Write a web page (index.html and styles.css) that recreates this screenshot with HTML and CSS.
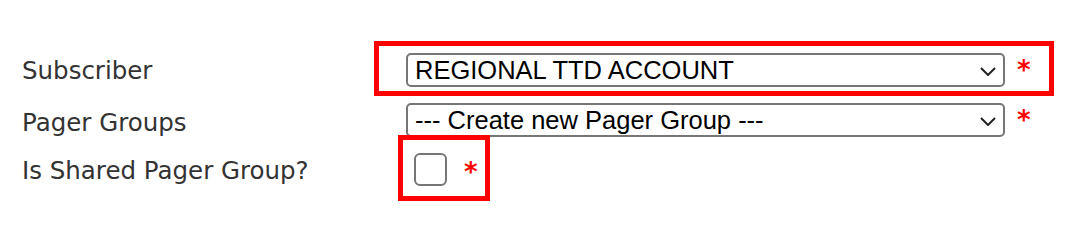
FILE: index.html
```html
<!DOCTYPE html>
<html lang="en">
<head>
<meta charset="utf-8">
<title>Pager Group</title>
<link rel="stylesheet" href="styles.css">
</head>
<body>
<form class="form">
  <div class="row row-first">
    <label class="label">Subscriber</label>
    <div class="field highlight highlight-select">
      <div class="select" role="combobox" aria-expanded="false">
        <span class="select-text">REGIONAL TTD ACCOUNT</span>
        <svg class="chevron" width="16" height="9" viewBox="0 0 16 9" aria-hidden="true"><polyline points="1,1 8,8 15,1" fill="none" stroke="#222" stroke-width="2"/></svg>
      </div>
      <span class="req">*</span>
    </div>
  </div>
  <div class="row row-second">
    <label class="label">Pager Groups</label>
    <div class="field">
      <div class="select" role="combobox" aria-expanded="false">
        <span class="select-text">--- Create new Pager Group ---</span>
        <svg class="chevron" width="16" height="9" viewBox="0 0 16 9" aria-hidden="true"><polyline points="1,1 8,8 15,1" fill="none" stroke="#222" stroke-width="2"/></svg>
      </div>
      <span class="req">*</span>
    </div>
  </div>
  <div class="row row-third">
    <label class="label">Is Shared Pager Group?</label>
    <div class="field highlight highlight-check">
      <input type="checkbox" class="check">
      <span class="req req-check">*</span>
    </div>
  </div>
</form>
</body>
</html>
```
FILE: styles.css
```css
html, body {
  margin: 0;
  padding: 0;
  background: #fff;
}

.form {
  padding-top: 41px;
}

.row {
  display: grid;
  grid-template-columns: 406px auto;
  align-items: center;
}

.row-second {
  margin-top: 7px;
}

.row-third {
  margin-top: -2px;
}

.label {
  padding-left: 22px;
  padding-top: 4px;
  font-family: "DejaVu Sans", Verdana, sans-serif;
  font-size: 24.5px;
  color: #333;
}

.field {
  display: flex;
  align-items: center;
  justify-self: start;
}

.highlight {
  border: 5px solid #f00;
}

.highlight-select {
  margin-left: -32px;
  padding: 7px 18px 4px 27px;
}

.highlight-check {
  margin-left: -8px;
  padding: 13px 7px 10px 11px;
}

.select {
  box-sizing: border-box;
  width: 599px;
  height: 34px;
  border: 2px solid #767676;
  border-radius: 5px;
  padding: 0 7px 0 7px;
  display: flex;
  align-items: center;
  justify-content: space-between;
  background: #fff;
}

.select-text {
  font-family: "Liberation Sans", Arial, sans-serif;
  font-size: 25.5px;
  color: #000;
  white-space: nowrap;
}

.chevron {
  display: block;
  margin-top: 2px;
}

.req {
  margin-left: 12px;
  font-family: "DejaVu Sans", Verdana, sans-serif;
  font-size: 26px;
  font-weight: bold;
  line-height: 1;
  color: #f00;
}

.check {
  appearance: none;
  -webkit-appearance: none;
  box-sizing: border-box;
  width: 33px;
  height: 33px;
  margin: 0;
  border: 2px solid #767676;
  border-radius: 6px;
  background: #fff;
}

.req-check {
  margin-left: 17px;
  margin-top: 4px;
}
```
